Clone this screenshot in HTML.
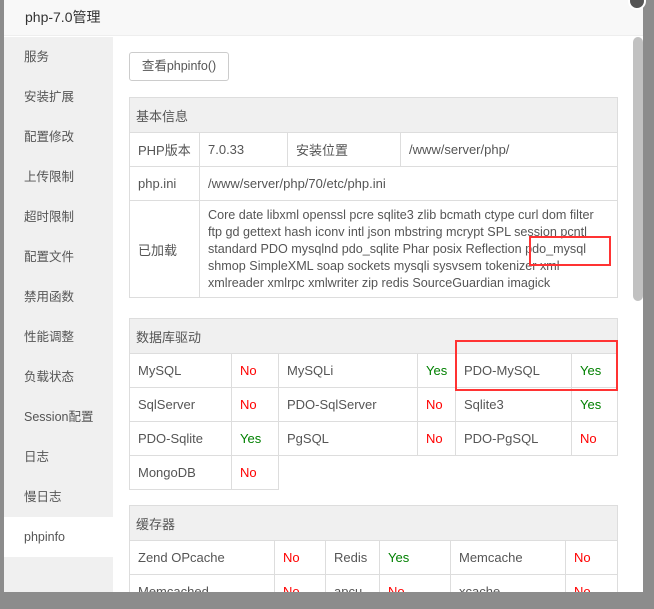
<!DOCTYPE html>
<html><head><meta charset="utf-8"><style>
*{box-sizing:border-box;margin:0;padding:0}
body{width:654px;height:609px;overflow:hidden;background:#8c8c8c;font-family:"Liberation Sans","Noto Sans CJK SC",sans-serif;font-size:13px;color:#555;position:relative}
.dlg{position:absolute;left:4px;top:0;width:639px;height:592px;background:#fff;overflow:hidden}
.title{height:36px;background:#f8f8f8;border-bottom:1px solid #eee;padding-left:21px;line-height:34px;font-size:14px;color:#333}
.side{position:absolute;left:0;top:37px;width:109px;height:555px;background:#f0f0f0}
.side div{height:40px;line-height:40px;padding-left:20px;font-size:12.5px;color:#555}
.side .on{background:#fff}
.main{position:absolute;left:109px;top:37px;width:520px;height:555px;overflow:hidden}
.btn{position:absolute;left:16px;top:15px;width:100px;height:29px;border:1px solid #ccc;border-radius:3px;line-height:27px;text-align:center;color:#555;font-size:12.5px}
table{position:absolute;left:16px;border-collapse:collapse;width:489px;table-layout:fixed}
td{border:1px solid #ddd;padding:0 8px;height:34px;color:#555;white-space:nowrap;overflow:hidden}
th{background:#f0f0f0;border:1px solid #ddd;height:35px;text-align:left;padding-left:6px;font-weight:normal;font-size:13px;color:#555}
.r{color:#f00}.g{color:green}
.box{position:absolute;border:2px solid #f33}
.thumb{position:absolute;left:633px;top:37px;width:10px;height:264px;background:#c1c1c1;border-radius:5px}
.ld{line-height:17px;font-size:12.6px;padding-right:2px}
</style></head><body>
<div class="dlg">
<div class="title">php-7.0管理</div>
<div class="side">
<div>服务</div><div>安装扩展</div><div>配置修改</div><div>上传限制</div><div>超时限制</div><div>配置文件</div><div>禁用函数</div><div>性能调整</div><div>负载状态</div><div>Session配置</div><div>日志</div><div>慢日志</div><div class="on">phpinfo</div>
</div>
<div class="main">
<div class="btn">查看phpinfo()</div>
<table style="top:60px">
<colgroup><col style="width:70px"><col style="width:88px"><col style="width:113px"><col></colgroup>
<tr><th colspan="4">基本信息</th></tr>
<tr><td>PHP版本</td><td>7.0.33</td><td>安装位置</td><td>/www/server/php/</td></tr>
<tr><td>php.ini</td><td colspan="3">/www/server/php/70/etc/php.ini</td></tr>
<tr><td style="height:97px">已加载</td><td colspan="3" class="ld">Core date libxml openssl pcre sqlite3 zlib bcmath ctype curl dom filter<br>ftp gd gettext hash iconv intl json mbstring mcrypt SPL session pcntl<br>standard PDO mysqlnd pdo_sqlite Phar posix Reflection pdo_mysql<br>shmop SimpleXML soap sockets mysqli sysvsem tokenizer xml<br>xmlreader xmlrpc xmlwriter zip redis SourceGuardian imagick</td></tr>
</table>
<table style="top:281px">
<colgroup><col style="width:102px"><col style="width:47px"><col style="width:139px"><col style="width:38px"><col style="width:116px"><col></colgroup>
<tr><th colspan="6">数据库驱动</th></tr>
<tr><td>MySQL</td><td class="r">No</td><td>MySQLi</td><td class="g">Yes</td><td>PDO-MySQL</td><td class="g">Yes</td></tr>
<tr><td>SqlServer</td><td class="r">No</td><td>PDO-SqlServer</td><td class="r">No</td><td>Sqlite3</td><td class="g">Yes</td></tr>
<tr><td>PDO-Sqlite</td><td class="g">Yes</td><td>PgSQL</td><td class="r">No</td><td>PDO-PgSQL</td><td class="r">No</td></tr>
<tr><td>MongoDB</td><td class="r">No</td><td style="border:none;border-top:1px solid #ddd;border-left:1px solid #ddd" colspan="4"></td></tr>
</table>
<table style="top:468px">
<colgroup><col style="width:145px"><col style="width:51px"><col style="width:54px"><col style="width:71px"><col style="width:115px"><col></colgroup>
<tr><th colspan="6">缓存器</th></tr>
<tr><td>Zend OPcache</td><td class="r">No</td><td>Redis</td><td class="g">Yes</td><td>Memcache</td><td class="r">No</td></tr>
<tr><td>Memcached</td><td class="r">No</td><td>apcu</td><td class="r">No</td><td>xcache</td><td class="r">No</td></tr>
</table>
</div>
<div class="box" style="left:525px;top:236px;width:82px;height:30px"></div>
<div class="box" style="left:451px;top:340px;width:163px;height:51px"></div>
</div>
<div class="thumb"></div>
<div style="position:absolute;left:628px;top:-8px;width:18px;height:18px;border-radius:50%;background:#555;border:2px solid #fff"></div>
</body></html>
